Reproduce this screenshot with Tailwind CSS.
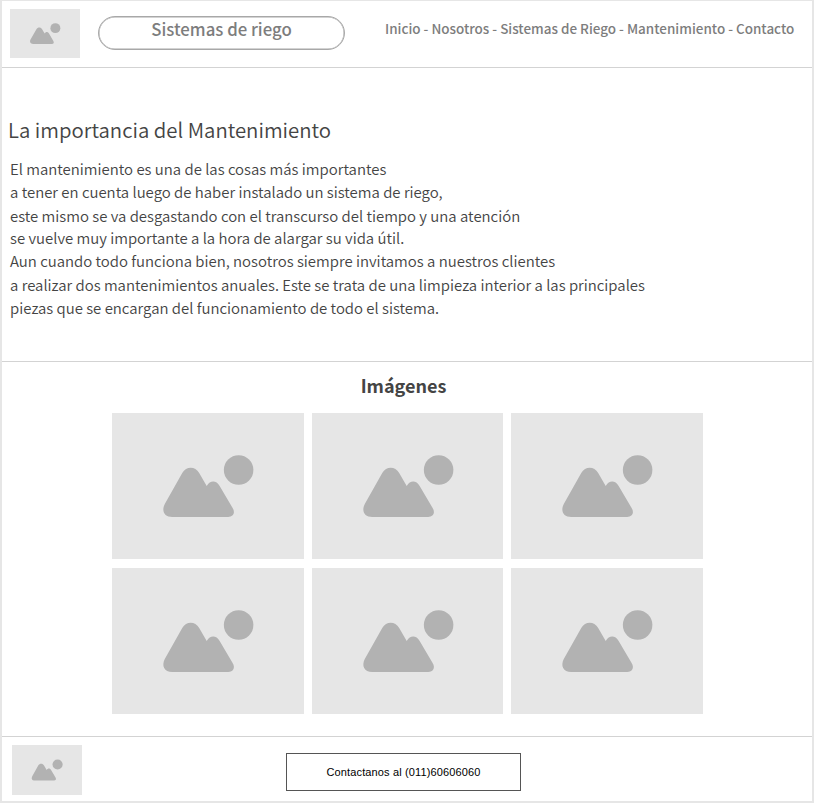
<!DOCTYPE html>
<html lang="es">
<head>
<meta charset="utf-8">
<title>Mantenimiento</title>
<script src="https://cdn.jsdelivr.net/npm/@tailwindcss/browser@4"></script>
</head>
<body class="bg-white font-['Noto_Sans_CJK_SC',sans-serif] text-[#444]">
<svg class="hidden">
  <symbol id="photo" viewBox="-0.400 0 192 146">
    <path fill="#b2b2b2" d="M70 60C74 53 83 53 87 60L94.500 73C98 67 104 67 107.500 73L120.500 95C123.500 100 121 104 116 104H60C52 104 49 98 52.500 91Z"/>
    <circle cx="126.500" cy="57" r="14.800" fill="#b2b2b2"/>
  </symbol>
</svg>
<div class="flex h-[803px] w-[814px] flex-col border-t border-r-2 border-b-2 border-l-2 border-[#e6e6e6]">
  <header class="flex h-[67px] shrink-0 border-b border-[#d3d3d3] pt-2 pl-2">
    <svg class="h-[49px] w-[70px] bg-[#e6e6e6]"><use href="#photo"/></svg>
    <div class="mt-[7px] ml-[18px] h-[34px] w-[247px] rounded-full border border-[#a8a8a8] text-center text-[16.800px] leading-[24px] font-medium whitespace-nowrap text-[#7d7d7d] shadow-[inset_0_0_0_0.500px_#a8a8a8]">Sistemas de riego</div>
    <nav class="mt-[9px] ml-[40px] text-[13.460px] leading-[20px] font-medium whitespace-nowrap text-[#7d7d7d]">Inicio - Nosotros - Sistemas de Riego - Mantenimiento - Contacto</nav>
  </header>
  <main class="h-[294px] shrink-0 border-b border-[#d3d3d3] pt-[45px] pl-[6px]">
    <h1 class="text-[20.350px] leading-[32px] font-[350] whitespace-nowrap">La importancia del Mantenimiento</h1>
    <div class="mt-[12px] ml-[2px] text-[14.930px] leading-[23px] font-[350] whitespace-nowrap">
      <p>El mantenimiento es una de las cosas más importantes</p>
      <p class="mb-px">a tener en cuenta luego de haber instalado un sistema de riego,</p>
      <p class="-mb-px">este mismo se va desgastando con el transcurso del tiempo y una atención</p>
      <p>se vuelve muy importante a la hora de alargar su vida útil.</p>
      <p class="mb-px">Aun cuando todo funciona bien, nosotros siempre invitamos a nuestros clientes</p>
      <p>a realizar dos mantenimientos anuales. Este se trata de una limpieza interior a las principales</p>
      <p>piezas que se encargan del funcionamiento de todo el sistema.</p>
    </div>
  </main>
  <section class="h-[375px] shrink-0 border-b border-[#d3d3d3] pt-[9px]">
    <h2 class="pr-[7px] text-center text-[18px] leading-[28px] font-bold">Imágenes</h2>
    <div class="mt-[14px] ml-[110.300px] grid w-[590.700px] grid-cols-3 gap-x-2 gap-y-[9px]">
      <svg class="h-[146px] w-full bg-[#e6e6e6]"><use href="#photo"/></svg>
      <svg class="h-[146px] w-full bg-[#e6e6e6]"><use href="#photo"/></svg>
      <svg class="h-[146px] w-full bg-[#e6e6e6]"><use href="#photo"/></svg>
      <svg class="h-[146px] w-full bg-[#e6e6e6]"><use href="#photo"/></svg>
      <svg class="h-[146px] w-full bg-[#e6e6e6]"><use href="#photo"/></svg>
      <svg class="h-[146px] w-full bg-[#e6e6e6]"><use href="#photo"/></svg>
    </div>
  </section>
  <footer class="flex flex-1 pt-2 pl-[10px]">
    <svg class="h-[50px] w-[70px] bg-[#e6e6e6]"><use href="#photo"/></svg>
    <button class="mt-2 ml-[204px] h-[38px] w-[235px] border border-[#555] font-['Liberation_Sans',sans-serif] text-[11px] tracking-[0.130px] text-black">Contactanos al (011)60606060</button>
  </footer>
</div>
</body>
</html>
